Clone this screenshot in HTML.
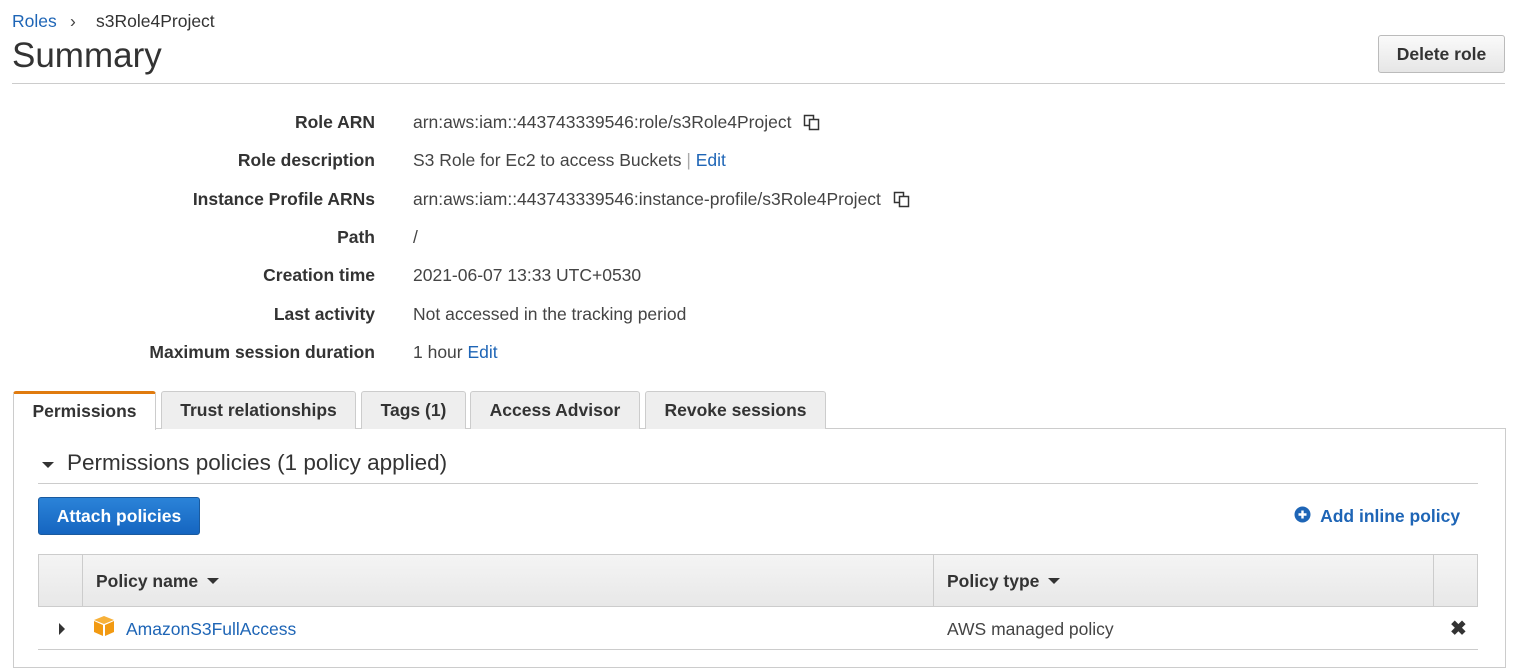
<!DOCTYPE html>
<html><head><meta charset="utf-8"><style>
*{box-sizing:border-box;margin:0;padding:0}
body{width:1526px;height:651px;overflow:hidden;background:#fff;font-family:"Liberation Sans",Arial,sans-serif;color:#444;font-size:17.5px;position:relative}
.a{position:absolute;white-space:nowrap}
a,.lnk{color:#1e65b6;text-decoration:none}
.lbl{position:absolute;right:1151px;font-weight:bold;color:#333;white-space:nowrap}
.val{position:absolute;left:413px;white-space:nowrap;color:#444}
.tab{position:absolute;top:391px;height:38px;background:#eee;border:1px solid #ccc;border-bottom:none;border-radius:3px 3px 0 0;font-weight:bold;color:#333;text-align:center;line-height:37px}
.cp{display:inline-block;width:17px;height:17px;vertical-align:-3px;margin-left:12px}
</style></head><body>
<div class="a" style="left:12px;top:11px"><span class="lnk">Roles</span><span style="position:absolute;left:58px;color:#444">›</span><span style="position:absolute;left:84px;color:#333">s3Role4Project</span></div>
<div class="a" style="left:12px;top:36px;font-size:35px;color:#333">Summary</div>
<div class="a" style="left:1378px;top:35px;width:127px;height:38px;border:1px solid #bbb;border-radius:3px;background:linear-gradient(#fafafa,#e6e6e6);font-weight:bold;color:#333;text-align:center;line-height:36px">Delete role</div>
<div class="a" style="left:12px;top:83px;width:1493px;border-top:1px solid #ccc"></div>

<div class="lbl" style="top:112px">Role ARN</div><div class="val" style="top:112px">arn:aws:iam::443743339546:role/s3Role4Project<svg class="cp" viewBox="0 0 17 17"><rect x="1.5" y="1.5" width="9" height="10" fill="#fff" stroke="#333" stroke-width="1.5"/><rect x="6.5" y="5.5" width="9" height="10" fill="#fff" stroke="#333" stroke-width="1.5"/></svg></div>
<div class="lbl" style="top:150px">Role description</div><div class="val" style="top:150px">S3 Role for Ec2 to access Buckets <span style="color:#aaa">|</span> <span class="lnk">Edit</span></div>
<div class="lbl" style="top:189px">Instance Profile ARNs</div><div class="val" style="top:189px">arn:aws:iam::443743339546:instance-profile/s3Role4Project<svg class="cp" viewBox="0 0 17 17"><rect x="1.5" y="1.5" width="9" height="10" fill="#fff" stroke="#333" stroke-width="1.5"/><rect x="6.5" y="5.5" width="9" height="10" fill="#fff" stroke="#333" stroke-width="1.5"/></svg></div>
<div class="lbl" style="top:227px">Path</div><div class="val" style="top:227px">/</div>
<div class="lbl" style="top:265px">Creation time</div><div class="val" style="top:265px">2021-06-07 13:33 UTC+0530</div>
<div class="lbl" style="top:304px">Last activity</div><div class="val" style="top:304px">Not accessed in the tracking period</div>
<div class="lbl" style="top:342px">Maximum session duration</div><div class="val" style="top:342px">1 hour <span class="lnk">Edit</span></div>

<div class="a" style="left:13px;top:428px;width:1493px;height:240px;border:1px solid #ccc"></div>
<div class="tab" style="left:13px;width:143px;background:#fff;border-top:3px solid #e07b0f;height:39px;line-height:35px">Permissions</div>
<div class="tab" style="left:161px;width:195px">Trust relationships</div>
<div class="tab" style="left:361px;width:105px">Tags (1)</div>
<div class="tab" style="left:470px;width:170px">Access Advisor</div>
<div class="tab" style="left:645px;width:181px">Revoke sessions</div>

<div class="a" style="left:42px;top:462px;width:0;height:0;border-left:6px solid transparent;border-right:6px solid transparent;border-top:6px solid #333"></div>
<div class="a" style="left:67px;top:450px;font-size:22.5px;color:#333">Permissions policies (1 policy applied)</div>
<div class="a" style="left:38px;top:483px;width:1440px;border-top:1px solid #ccc"></div>
<div class="a" style="left:38px;top:497px;width:162px;height:38px;border:1px solid #1a5a9e;border-radius:3px;background:linear-gradient(#2b83d8,#1565c0);color:#fff;font-weight:bold;text-align:center;line-height:36px">Attach policies</div>
<div class="a" style="left:1294px;top:506px;font-weight:bold;color:#1e65b6"><svg width="17" height="17" viewBox="0 0 17 17" style="vertical-align:-1px"><circle cx="8.5" cy="8.5" r="8" fill="#1e65b6"/><path d="M4.5 8.5h8M8.5 4.5v8" stroke="#fff" stroke-width="2.4"/></svg>&nbsp; Add inline policy</div>

<div class="a" style="left:38px;top:554px;width:1440px;height:53px;border:1px solid #ccc;background:linear-gradient(#f4f4f4,#e8e8e8)"></div>
<div class="a" style="left:82px;top:554px;height:53px;border-left:1px solid #ccc"></div>
<div class="a" style="left:933px;top:554px;height:53px;border-left:1px solid #ccc"></div>
<div class="a" style="left:1433px;top:554px;height:53px;border-left:1px solid #ccc"></div>
<div class="a" style="left:96px;top:571px;font-weight:bold;color:#333">Policy name <span style="display:inline-block;width:0;height:0;border-left:6px solid transparent;border-right:6px solid transparent;border-top:6px solid #333;vertical-align:3px;margin-left:4px"></span></div>
<div class="a" style="left:947px;top:571px;font-weight:bold;color:#333">Policy type <span style="display:inline-block;width:0;height:0;border-left:6px solid transparent;border-right:6px solid transparent;border-top:6px solid #333;vertical-align:3px;margin-left:4px"></span></div>
<div class="a" style="left:59px;top:623px;width:0;height:0;border-top:6px solid transparent;border-bottom:6px solid transparent;border-left:6px solid #333"></div>
<svg class="a" style="left:93px;top:615px" width="22" height="22" viewBox="0 0 22 22"><path d="M11 1L21 5L11 9L1 5Z" fill="#f7b13a"/><path d="M1 6L10 10V21L1 17Z" fill="#f29a12"/><path d="M21 6L12 10V21L21 17Z" fill="#f29a12"/></svg>
<div class="a lnk" style="left:126px;top:619px">AmazonS3FullAccess</div>
<div class="a" style="left:947px;top:619px">AWS managed policy</div>
<div class="a" style="left:1450px;top:616px;font-size:20px;font-weight:bold;color:#333">✖</div>
<div class="a" style="left:38px;top:649px;width:1440px;border-top:1px solid #ccc"></div>
</body></html>
